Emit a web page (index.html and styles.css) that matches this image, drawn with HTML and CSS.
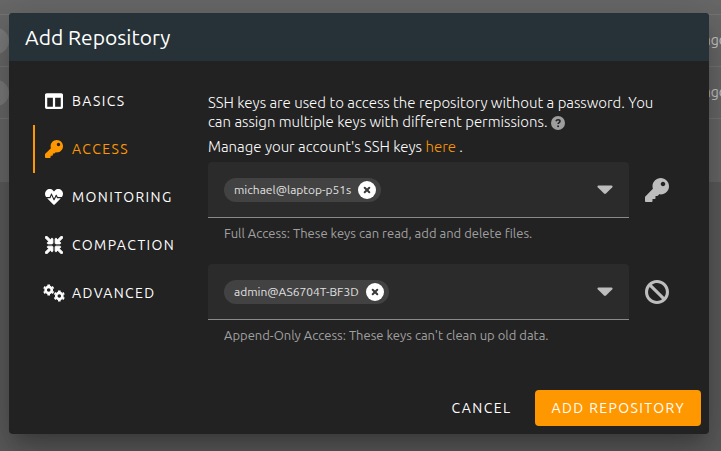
FILE: index.html
```html
<!DOCTYPE html>
<html lang="en">
<head>
<meta charset="utf-8">
<meta name="viewport" content="width=device-width, initial-scale=1">
<title>Add Repository</title>
<link rel="stylesheet" href="styles.css">
</head>
<body>
<svg class="sprite" aria-hidden="true">
  <symbol id="key" viewBox="0 0 512 512"><path d="M512 176.001C512 273.203 433.202 352 336 352c-11.22 0-22.19-1.062-32.827-3.069l-24.012 27.014A23.999 23.999 0 0 1 261.223 384H224v40c0 13.255-10.745 24-24 24h-40v40c0 13.255-10.745 24-24 24H24c-13.255 0-24-10.745-24-24v-78.059c0-6.365 2.529-12.47 7.029-16.971l161.802-161.802C163.108 213.814 160 195.271 160 176 160 78.798 238.797.001 335.999 0 433.488-.001 512 78.511 512 176.001zM336 128c0 26.51 21.49 48 48 48s48-21.49 48-48-21.49-48-48-48-48 21.49-48 48z"/></symbol>
  <symbol id="remove" viewBox="0 0 18 18"><circle cx="9" cy="9" r="9" fill="#fff"/><path d="M6.7 6.7l4.6 4.6M11.3 6.7l-4.6 4.6" fill="none" stroke="#3a3a3a" stroke-width="2" stroke-linecap="round"/></symbol>
  <symbol id="caret" viewBox="0 0 16 10"><path d="M1.5 .5h13c1 0 1.400 1 .8 1.700L9 8.600c-.6.6-1.400.6-2 0L.7 2.200C.1 1.500.5.5 1.500.5z"/></symbol>
</svg>

<div class="backdrop" aria-hidden="true">
  <div class="row"></div>
  <div class="row"><span class="avatar"></span><span>ago</span></div>
  <div class="row"><span class="avatar"></span><span>ago</span></div>
  <div class="row last"></div>
</div>

<main class="dialog" role="dialog" aria-labelledby="title">
  <header class="head"><h1 id="title">Add Repository</h1></header>
  <div class="body">
    <nav class="tabs" aria-label="Sections">
      <button class="tab" type="button"><svg class="icon" viewBox="0 0 512 512"><path d="M464 32H48C21.490 32 0 53.490 0 80v352c0 26.510 21.490 48 48 48h416c26.510 0 48-21.490 48-48V80c0-26.510-21.490-48-48-48zM224 416H64V160h160v256zm224 0H288V160h160v256z"/></svg>BASICS</button>
      <button class="tab active" type="button" aria-current="true"><svg class="icon"><use href="#key"/></svg>ACCESS</button>
      <button class="tab" type="button"><svg class="icon" viewBox="0 0 512 512"><path d="M320.2 243.8l-49.7 99.4c-6 12.1-23.4 11.7-28.9-.6l-56.9-126.3-30 71.7H60.6l182.5 186.5c7.1 7.3 18.6 7.3 25.7 0L451.4 288H342.3l-22.1-44.2zM473.7 73.9l-2.4-2.5c-51.5-52.6-135.8-52.6-187.4 0L256 100l-27.9-28.5c-51.5-52.7-135.9-52.7-187.4 0l-2.4 2.4C-10.4 123.7-12.5 203 31 256h102.4l35.9-86.2c5.4-12.9 23.6-13.1 29.3-.4l58.2 129.3 49-97.9c5.9-11.8 22.7-11.8 28.6 0l27.6 55.2H481c43.5-53 41.4-132.3-7.3-182.1z"/></svg>MONITORING</button>
      <button class="tab" type="button"><svg class="icon" viewBox="0 0 512 512"><path stroke="currentColor" stroke-width="26" d="M200 288H88c-21.4 0-32.1 25.8-17 41l32.9 31-99.2 99.3c-6.2 6.2-6.2 16.4 0 22.6l25.4 25.4c6.2 6.2 16.4 6.2 22.6 0L152 408l31.1 33c15.1 15.1 40.9 4.4 40.9-17V312c0-13.3-10.7-24-24-24zm112-64h112c21.4 0 32.1-25.9 17-41l-33-31 99.3-99.3c6.2-6.2 6.2-16.4 0-22.6L481.900 4.700c-6.2-6.2-16.4-6.2-22.6 0L360 104l-31.1-33C313.800 55.900 288 66.600 288 88v112c0 13.300 10.700 24 24 24zm96 136l33-31.1c15.100-15.100 4.400-40.900-17-40.900H312c-13.300 0-24 10.700-24 24v112c0 21.400 25.900 32.100 41 17l31-32.900 99.300 99.300c6.200 6.200 16.400 6.200 22.600 0l25.400-25.400c6.200-6.200 6.200-16.400 0-22.600L408 360zM183 71.100L152 104 52.700 4.700c-6.200-6.200-16.400-6.200-22.600 0L4.700 30.100c-6.200 6.200-6.200 16.400 0 22.600L104 152l-33 31.100C55.900 198.200 66.600 224 88 224h112c13.300 0 24-10.700 24-24V88c0-21.300-25.900-32-41-16.900z"/></svg>COMPACTION</button>
      <button class="tab" type="button"><svg class="icon wide" viewBox="0 0 22 18">
        <g id="gear" fill="none" stroke="currentColor"><circle cx="5.700" cy="6" r="3.100" stroke-width="2.600"/><path d="M5.700 2V.4M5.700 10v1.600M9.200 4l1.300-.8M9.200 8l1.300.8M2.200 4L.9 3.200M2.200 8l-1.300.8" stroke-width="2.600"/></g>
        <use href="#gear" transform="translate(10.600 6)"/></svg>ADVANCED</button>
    </nav>
    <section class="panel">
      <p>SSH keys are used to access the repository without a password. You<br>can assign multiple keys with different permissions.
        <svg class="help" viewBox="0 0 14 14" role="img" aria-label="Help"><circle cx="7" cy="7" r="7" fill="#9e9e9e"/><path d="M5 5.300C5.400 4 6.100 3.700 7 3.700c1.200 0 2 .7 2 1.600C9 6.600 7.100 6.500 7.100 8" fill="none" stroke="#222" stroke-width="1.600"/><circle cx="7.100" cy="10.200" r="1" fill="#222"/></svg></p>
      <p>Manage your account's SSH keys <a href="#keys">here</a> .</p>
      <div class="field">
        <div class="box" role="group" aria-label="Full Access keys" aria-describedby="full-hint">
          <span class="chip">michael@laptop-p51s<button class="remove" type="button" aria-label="Remove michael@laptop-p51s"><svg><use href="#remove"/></svg></button></span>
          <button class="open" type="button" aria-label="Choose full access keys" aria-haspopup="listbox"><svg><use href="#caret"/></svg></button>
        </div>
        <svg class="mark"><use href="#key"/></svg>
        <p class="hint" id="full-hint">Full Access: These keys can read, add and delete files.</p>
      </div>
      <div class="field">
        <div class="box" role="group" aria-label="Append-Only Access keys" aria-describedby="append-hint">
          <span class="chip">admin@AS6704T-BF3D<button class="remove" type="button" aria-label="Remove admin@AS6704T-BF3D"><svg><use href="#remove"/></svg></button></span>
          <button class="open" type="button" aria-label="Choose append-only keys" aria-haspopup="listbox"><svg><use href="#caret"/></svg></button>
        </div>
        <svg class="mark" viewBox="8 8 496 496"><path d="M256 8C119.034 8 8 119.033 8 256s111.034 248 248 248 248-111.034 248-248S392.967 8 256 8zm130.108 117.892c65.448 65.448 70 165.481 20.677 235.637L150.470 105.216c70.204-49.356 170.226-44.735 235.638 20.676zM125.892 386.108c-65.448-65.448-70-165.481-20.677-235.637L361.530 406.784c-70.203 49.356-170.226 44.736-235.638-20.676z"/></svg>
        <p class="hint" id="append-hint">Append-Only Access: These keys can't clean up old data.</p>
      </div>
    </section>
  </div>
  <footer class="actions">
    <button class="btn" type="button">CANCEL</button>
    <button class="btn primary" type="button">ADD REPOSITORY</button>
  </footer>
</main>
</body>
</html>
```
FILE: styles.css
```css
* { box-sizing: border-box; }
body {
  margin: 0;
  min-height: 100vh;
  padding: 13px 12px 17px 9px;
  background: #5b5b5b;
  color: #fff;
  font: 14px/19px Ubuntu, "Noto Sans", sans-serif;
  overflow: hidden;
}
h1, p { margin: 0; }
button {
  padding: 0;
  border: 0;
  background: none;
  color: inherit;
  font: inherit;
  cursor: pointer;
}
svg { fill: currentColor; }
.sprite { position: absolute; width: 0; height: 0; }

/* dimmed page behind the dialog */
.backdrop {
  position: absolute;
  inset: 0;
  overflow: hidden;
  color: #c8c8c8;
}
.row {
  display: flex;
  align-items: center;
  justify-content: space-between;
  height: 52px;
  margin-right: -6px;
  border-bottom: 1px solid #757575;
  background: #686868;
}
.row:first-child { height: 15px; }
.row.last { height: 63px; border: 0; }
.avatar {
  width: 26px;
  height: 26px;
  margin-left: -17px;
  border-radius: 50%;
  background: #7b7b7b;
}

.dialog {
  position: relative;
  border-radius: 4px;
  background: #222;
  box-shadow: 0 11px 15px -7px rgba(0, 0, 0, .2),
    0 24px 38px 3px rgba(0, 0, 0, .14),
    0 9px 46px 8px rgba(0, 0, 0, .12);
}
.head {
  padding: 8px 16px;
  border-radius: 4px 4px 0 0;
  background: #263238;
}
h1 { font-size: 21px; line-height: 32px; font-weight: 400; }
.body { display: flex; padding: 16px 24px 0; }
.tabs { flex: none; width: 175px; }
.tab {
  display: flex;
  align-items: center;
  gap: 9px;
  width: 100%;
  height: 48px;
  padding-left: 10px;
  border-left: 2px solid transparent;
  letter-spacing: .1em;
}
.tab.active { color: #ff9800; border-color: #ff9800; }
.icon { flex: none; width: 18px; height: 18px; }
.icon.wide { width: 22px; margin: 0 -2px; }

.panel { flex: 1; min-width: 0; padding-top: 16px; font-size: 15px; }
.panel > p { margin-bottom: 6px; font-weight: 300; white-space: nowrap; }
a { color: #ff9800; text-decoration: none; }
.help { width: 14px; height: 14px; vertical-align: -3px; }
.field {
  display: grid;
  grid-template-columns: 1fr 24px;
  column-gap: 16px;
  align-items: center;
  margin: 0 16px 23px 0;
}
.box {
  display: flex;
  align-items: center;
  justify-content: space-between;
  height: 56px;
  padding: 0 16px;
  border-bottom: 1px solid #8a8a8a;
  border-radius: 4px 4px 0 0;
  background: #2b2b2b;
}
.chip {
  display: flex;
  align-items: center;
  gap: 7px;
  height: 24px;
  padding: 0 5px 0 10px;
  border-radius: 12px;
  background: #424242;
  color: #e0e0e0;
  font-size: 12px;
}
.remove, .remove svg { display: block; width: 18px; height: 18px; }
.open { color: #bdbdbd; }
.open svg { display: block; width: 16px; height: 10px; }
.mark { width: 24px; height: 24px; color: #bdbdbd; }
.hint {
  grid-column: 1 / -1;
  padding: 7px 16px 0;
  color: #a0a0a0;
  font-size: 13px;
  line-height: 16px;
}

.actions {
  display: flex;
  justify-content: flex-end;
  gap: 8px;
  padding: 24px 8px 8px;
}
.btn {
  height: 36px;
  padding: 0 16px;
  border-radius: 4px;
  letter-spacing: .1em;
}
.primary { background: #ff9800; }
```
